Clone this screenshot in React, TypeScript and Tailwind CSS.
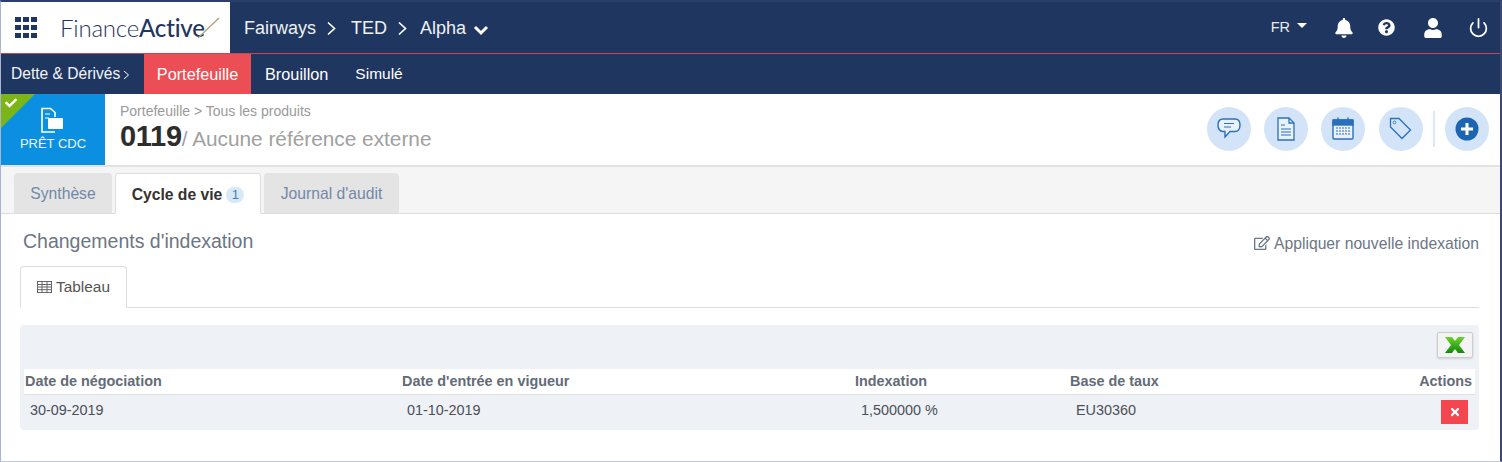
import React from "react";
import { FaBell, FaQuestionCircle, FaUser, FaTimes, FaRegEdit, FaCheck } from "react-icons/fa";
import { FiPower } from "react-icons/fi";

const Chev = ({ className = "" }: { className?: string }) => (
  <svg width="11" height="15" viewBox="0 0 11 15" fill="none" stroke="#fff" strokeWidth="1.7" className={className}>
    <path d="M2 1.5 L8.5 7.5 L2 13.5" />
  </svg>
);

const Round = ({ children }: { children: React.ReactNode }) => (
  <div className="w-[44px] h-[44px] rounded-full bg-[#d3e4f8] flex items-center justify-center shrink-0">{children}</div>
);

const columns = "grid grid-cols-[378px_453px_215px_1fr]";

export default function App() {
  return (
    <div className="w-[1502px] h-[462px] overflow-hidden bg-white border-l border-l-[#a9b4d0] border-r-2 border-r-[#3a4a72] border-t-2 border-t-[#2b3f6b] border-b border-b-[#c3c8d6] font-['Liberation_Sans',Arial,sans-serif] flex flex-col">
      {/* top bar */}
      <div className="h-[51px] bg-[#1f3660] flex items-center shrink-0">
        <div className="w-[229px] h-full bg-white flex items-center shrink-0 pl-[14px]">
          <div className="grid grid-cols-3 gap-[2.5px] w-[22px]">
            {Array.from({ length: 9 }).map((_, i) => (
              <div key={i} className="w-[5.5px] h-[5.5px] bg-[#1f3660]" />
            ))}
          </div>
          <div className="ml-[23px] flex items-center text-[24px] tracking-[-0.2px] text-[#1f3660] font-['Lato',sans-serif] leading-none">
            <span className="font-light">Finance</span>
            <span className="font-medium">Active</span>
            <svg width="24" height="24" viewBox="0 0 24 24" className="-ml-[8px]">
              <path d="M1 22 L22 2" stroke="#b3a276" strokeWidth="1.3" />
            </svg>
          </div>
        </div>
        <div className="flex items-center text-[18px] pl-[14px] pt-[2px] text-[#eef1f6]">
          <span>Fairways</span>
          <Chev className="ml-[10px] mr-[14px]" />
          <span>TED</span>
          <Chev className="ml-[10px] mr-[12px]" />
          <span>Alpha</span>
          <svg width="16" height="12" viewBox="0 0 16 12" fill="none" stroke="#fff" strokeWidth="3" className="ml-[7px] mt-[3px]">
            <path d="M2 3 L8 9 L14 3" />
          </svg>
        </div>
        <div className="ml-auto flex items-center text-white pr-[11px]">
          <span className="text-[14.5px] text-[#e8ebf1]">FR</span>
          <span className="ml-[7px] mb-[4px] w-0 h-0 border-l-[5px] border-r-[5px] border-t-[5px] border-l-transparent border-r-transparent border-t-white" />
          <FaBell className="ml-[27px] text-[20px]" />
          <FaQuestionCircle className="ml-[24px] text-[17px]" />
          <FaUser className="ml-[28px] text-[20px]" />
          <FiPower className="ml-[25px] text-[21px]" />
        </div>
      </div>
      <div className="h-px bg-[#c4475a] shrink-0" />
      {/* second bar */}
      <div className="h-[40px] bg-[#1f3660] flex items-stretch text-white text-[16.3px] shrink-0">
        <div className="w-[143px] flex items-center pl-[10px] text-[15.6px] text-[#f2f4f8]">
          Dette &amp; Dérivés
          <svg width="7" height="10" viewBox="0 0 7 10" fill="none" stroke="#fff" strokeWidth="1" className="ml-[3px] mt-[1px]">
            <path d="M1 1 L5.5 5 L1 9" />
          </svg>
        </div>
        <div className="w-[107px] bg-[#ec4e56] flex items-center justify-center">Portefeuille</div>
        <div className="ml-[14px] flex items-center">Brouillon</div>
        <div className="ml-[27px] flex items-center text-[15.5px]">Simulé</div>
      </div>
      {/* header */}
      <div className="h-[73px] bg-white flex items-stretch shrink-0 border-b-2 border-b-[#e2e2e2]">
        <div className="relative w-[104px] bg-[#0b8fe0] flex flex-col items-center text-white shrink-0 overflow-hidden">
          <div className="absolute left-0 top-0 w-0 h-0 border-t-[34px] border-t-[#7cb518] border-r-[34px] border-r-transparent" />
          <FaCheck className="absolute left-[4px] top-[3px] text-[12px] text-white" />
          <svg width="26" height="28" viewBox="0 0 26 28" className="mt-[13px]" fill="none" stroke="#fff" strokeWidth="1.6">
            <path d="M15 10 V5.5 L10.5 1.5 H2 V25 H15" />
            <path d="M5 7 H10 M5 11 H9" strokeWidth="1.2" />
            <rect x="8" y="11" width="15" height="11" rx="1" fill="#fff" stroke="none" />
          </svg>
          <div className="text-[13px] leading-none mt-[2px] text-[#eef6fd]">PRÊT CDC</div>
        </div>
        <div className="pl-[15px] pt-[9px] flex flex-col">
          <div className="text-[14px] leading-[16px] text-[#9a9a9a]">Portefeuille &gt; Tous les produits</div>
          <div className="flex items-baseline leading-[30px] mt-[2px]">
            <span className="text-[29px] font-bold text-[#2d2d2d] tracking-[-0.3px]">0119</span>
            <span className="text-[20.8px] text-[#a0a0a0]">/ Aucune référence externe</span>
          </div>
        </div>
        <div className="ml-auto flex items-center gap-[13.3px] pr-[11px] pb-[2px]">
          <Round>
            <svg width="24" height="22" viewBox="0 0 24 22" fill="none" stroke="#2a70bb" strokeWidth="1.4">
              <path d="M6 1 H18 C21 1 23 3 23 7 C23 11 21 13.5 18 13.5 H13 L8 19 V13.5 H6 C3 13.5 1 11 1 7 C1 3 3 1 6 1 Z" fill="#e9f1fb" />
              <path d="M7 5.5 H17 M7 9 H14" strokeWidth="1.2" />
            </svg>
          </Round>
          <Round>
            <svg width="18" height="24" viewBox="0 0 18 24" fill="none" stroke="#2a70bb" strokeWidth="1.3">
              <path d="M1 1 H12 L17 6 V23 H1 Z" fill="#e9f1fb" />
              <path d="M12 1 V6 H17" />
              <path d="M4 8 H8 M4 12 H14 M4 15 H14 M4 18 H14" strokeWidth="1.1" />
            </svg>
          </Round>
          <Round>
            <svg width="22" height="23" viewBox="0 0 22 23" fill="none" stroke="#2a70bb" strokeWidth="1.4">
              <rect x="1" y="3" width="20" height="19" rx="1" fill="#e9f1fb" />
              <rect x="1" y="3" width="20" height="5" fill="#2a70bb" />
              <path d="M6 0.5 V4 M16 0.5 V4" />
              <path d="M4 11 H18 M4 14 H18 M4 17 H18" strokeDasharray="2 1" strokeWidth="1.2" />
            </svg>
          </Round>
          <Round>
            <svg width="23" height="23" viewBox="0 0 23 23" fill="none" stroke="#2a70bb" strokeWidth="1.3">
              <path d="M1.5 1.5 H10 L21.5 13 L13 21.5 L1.5 10 Z" />
              <circle cx="5.5" cy="5.5" r="1.4" strokeWidth="0.8" />
            </svg>
          </Round>
          <div className="flex items-center gap-[10px] -ml-[3px]">
            <div className="w-[2px] h-[36px] bg-[#dde8f6]" />
            <Round>
              <svg width="24" height="24" viewBox="0 0 24 24">
                <circle cx="12" cy="12" r="11.5" fill="#1c65b1" />
                <path d="M12 6 V18 M6 12 H18" stroke="#fff" strokeWidth="3" />
              </svg>
            </Round>
          </div>
        </div>
      </div>
      {/* tabs */}
      <div className="h-[47px] bg-[#f5f5f5] flex items-end pl-[13px] border-b border-b-[#dddddd] shrink-0">
        <div className="w-[98px] h-[40px] mr-[3px] pt-[2px] bg-[#e4e4e4] rounded-t-[4px] flex items-center justify-center text-[15.7px] text-[#7388a8]">Synthèse</div>
        <div className="w-[146px] h-[41px] -mb-px mr-[3px] pt-[2px] bg-white border border-[#dddddd] border-b-white rounded-t-[4px] flex items-center justify-center text-[15.7px] font-bold text-[#333333]">
          Cycle de vie
          <span className="ml-[4px] w-[18px] h-[16px] rounded-full bg-[#d8e8f5] text-[13px] font-normal text-[#3b82c0] flex items-center justify-center">1</span>
        </div>
        <div className="w-[135px] h-[40px] pt-[2px] bg-[#e4e4e4] rounded-t-[4px] flex items-center justify-center text-[15.7px] text-[#7388a8]">Journal d'audit</div>
      </div>
      {/* content */}
      <div className="flex-1 bg-white pl-[19px] pr-[21px]">
        <div className="h-[52px] flex items-center justify-between">
          <div className="pl-[3px] text-[19.5px] text-[#6c7684] mt-[3px]">Changements d'indexation</div>
          <div className="flex items-center text-[15.7px] text-[#6c7684] mt-[7px]">
            <FaRegEdit className="text-[16px] mr-[4px]" />
            Appliquer nouvelle indexation
          </div>
        </div>
        <div className="h-[42px] flex items-end border-b border-b-[#dddddd]">
          <div className="w-[107px] h-[42px] -mb-px bg-white border border-[#dddddd] border-b-white rounded-t-[4px] flex items-center justify-center text-[15.4px] text-[#555555]">
            <svg width="15" height="12" viewBox="0 0 15 12" fill="none" stroke="#666" strokeWidth="1" className="mr-[4px]">
              <rect x="0.5" y="0.5" width="14" height="11" />
              <path d="M0.5 3.5 H14.5 M0.5 6 H14.5 M0.5 8.7 H14.5 M5 0.5 V11.5 M10 0.5 V11.5" />
            </svg>
            Tableau
          </div>
        </div>
        <div className="mt-[17px] h-[105px] bg-[#eef1f6] rounded-[4px] flex flex-col pl-[4px] pr-[4px]">
          <div className="h-[44px] flex items-center justify-end shrink-0">
            <div className="w-[36px] h-[26px] mr-[2px] -mt-[5px] rounded-[2px] border border-[#cccccc] bg-[#f4f4f4] shadow-sm flex items-center justify-center">
              <svg width="22" height="16" viewBox="0 0 22 16">
                <defs>
                  <linearGradient id="xg" x1="0" y1="0" x2="0" y2="1">
                    <stop offset="0" stopColor="#6fd12c" />
                    <stop offset="1" stopColor="#0f8a0f" />
                  </linearGradient>
                </defs>
                <path d="M1 0 H8 L11 4 L14 0 H21 L15 8 L21 16 H14 L11 12 L8 16 H1 L7 8 Z" fill="url(#xg)" />
              </svg>
            </div>
          </div>
          <div className={`${columns} h-[26px] items-center bg-white border-b border-b-[#dfe1e5] text-[14.4px] font-bold text-[#636b78] shrink-0`}>
            <div className="pl-px">Date de négociation</div>
            <div>Date d'entrée en vigueur</div>
            <div>Indexation</div>
            <div className="flex justify-between pr-[3px]">
              <span>Base de taux</span>
              <span>Actions</span>
            </div>
          </div>
          <div className={`${columns} h-[33px] items-center text-[14.4px] text-[#4a4f58]`}>
            <div className="pl-[6px] pb-[2px]">30-09-2019</div>
            <div className="pl-[5px] pb-[2px]">01-10-2019</div>
            <div className="pl-[6px] pb-[2px]">1,500000 %</div>
            <div className="flex justify-between items-center pl-[6px] pr-[7px]">
              <span className="pb-[2px]">EU30360</span>
              <span className="w-[27px] h-[24px] bg-[#f4464e] flex items-center justify-center">
                <FaTimes className="text-white text-[12px]" />
              </span>
            </div>
          </div>
        </div>
      </div>
    </div>
  );
}
